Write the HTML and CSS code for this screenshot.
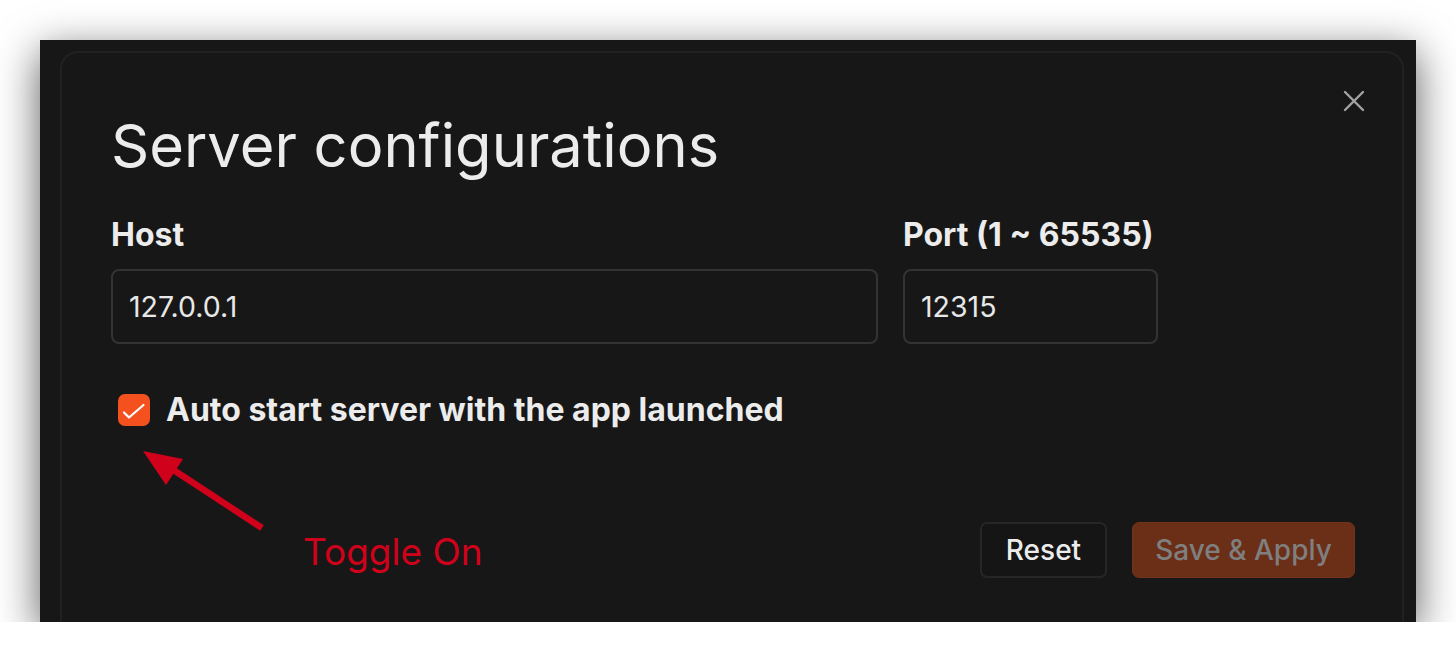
FILE: index.html
```html
<!DOCTYPE html>
<html>
<head>
<meta charset="utf-8">
<link rel="stylesheet" href="styles.css">
</head>
<body>
<div class="window">
  <div class="dialog">
    <button class="close" aria-label="Close">
      <svg width="22" height="22" viewBox="0 0 22 22"><path d="M2 2 L20 20 M20 2 L2 20" stroke="#a3a3a3" stroke-width="2.4" stroke-linecap="round"/></svg>
    </button>
    <h1 class="title">Server configurations</h1>
    <div class="fields">
      <div class="field host">
        <label class="label">Host</label>
        <div class="input">127.0.0.1</div>
      </div>
      <div class="field port">
        <label class="label">Port (1 ~ 65535)</label>
        <div class="input">12315</div>
      </div>
    </div>
    <div class="check-row">
      <span class="checkbox">
        <svg width="32" height="32" viewBox="0 0 32 32"><path d="M6 18.5 L11 23.5 L25.5 11" fill="none" stroke="#fff" stroke-width="2.2" stroke-linecap="round" stroke-linejoin="round"/></svg>
      </span>
      <span class="check-label">Auto start server with the app launched</span>
    </div>
    <div class="actions">
      <button class="btn reset">Reset</button>
      <button class="btn save">Save &amp; Apply</button>
    </div>
    <svg class="arrow" width="130" height="82" viewBox="0 0 130 82">
      <path d="M123 77 L30 16" stroke="#d0021b" stroke-width="6.5"/>
      <path d="M4 0 L44 8 L27 34 Z" fill="#d0021b"/>
    </svg>
    <span class="annotation">Toggle On</span>
  </div>
</div>
</body>
</html>
```
FILE: styles.css
```css
html, body {
  margin: 0;
  padding: 0;
  background: #ffffff;
}
body {
  font-family: Inter, "Noto Sans", sans-serif;
  color: #ececec;
}
.window {
  margin: 40px 40px 0 40px;
  height: 582px;
  background: #171717;
  overflow: hidden;
  box-shadow: 0 12px 40px rgba(0, 0, 0, 0.65);
  padding: 11px 12px 0 20px;
  box-sizing: border-box;
}
.dialog {
  position: relative;
  height: 640px;
  border: 2px solid #212121;
  border-radius: 18px;
  padding: 0 0 0 49px;
  box-sizing: border-box;
}
.close {
  position: absolute;
  top: 37px;
  right: 37px;
  width: 22px;
  height: 22px;
  padding: 0;
  border: none;
  background: transparent;
  display: flex;
}
.title {
  margin: 0;
  padding-top: 57px;
  font-size: 59.6px;
  font-weight: 400;
  line-height: 70px;
  letter-spacing: 0;
}
.fields {
  display: flex;
  gap: 25px;
  margin-top: 36px;
}
.field {
  display: flex;
  flex-direction: column;
  gap: 15px;
}
.host { width: 767px; }
.port { width: 255px; }
.label {
  font-size: 32px;
  font-weight: 700;
  line-height: 38px;
}
.input {
  height: 75px;
  border: 2px solid #333333;
  border-radius: 8px;
  box-sizing: border-box;
  padding: 0 16px;
  display: flex;
  align-items: center;
  font-size: 28.5px;
  color: #e8e8e8;
}
.check-row {
  display: flex;
  align-items: center;
  gap: 16px;
  margin-top: 46px;
  margin-left: 7px;
}
.checkbox {
  width: 32px;
  height: 32px;
  border-radius: 7px;
  background: #f4511e;
  display: flex;
  align-items: center;
  justify-content: center;
}
.check-label {
  font-size: 32px;
  font-weight: 700;
  line-height: 39px;
  color: #ececec;
}
.actions {
  display: flex;
  gap: 25px;
  margin-top: 93px;
  margin-left: 869px;
}
.btn {
  height: 56px;
  border-radius: 7px;
  font-family: Inter, "Noto Sans", sans-serif;
  font-size: 28px;
  font-weight: 500;
  box-sizing: border-box;
  padding: 0;
}
.reset {
  width: 127px;
  background: #151515;
  border: 2px solid #262626;
  color: #ececec;
}
.save {
  width: 223px;
  background: #6b2e17;
  border: 1px solid #73331b;
  color: #7f7f7f;
}
.arrow {
  position: absolute;
  left: 77px;
  top: 398px;
}
.annotation {
  position: absolute;
  left: 241px;
  top: 476px;
  font-size: 37px;
  color: #d0021b;
  font-family: Inter, "Noto Sans", sans-serif;
}
```
